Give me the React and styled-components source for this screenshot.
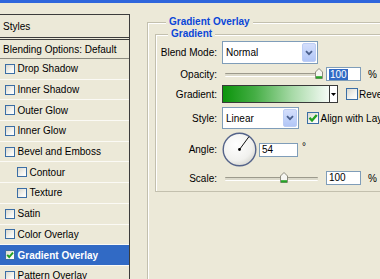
import React from 'react';
import styled, { createGlobalStyle } from 'styled-components';

const GlobalStyle = createGlobalStyle`
  html, body {
    margin: 0;
    padding: 0;
    background: #ece9d8;
  }
  body {
    font-family: "Liberation Sans", Arial, sans-serif;
    font-size: 10px;
    color: #000;
    overflow: hidden;
  }
`;

const Window = styled.div`
  width: 380px;
  height: 279px;
  box-sizing: border-box;
  border-top: 3px solid #2f66dc;
  background: #ece9d8;
  display: flex;
  overflow: hidden;
`;

/* ---------- left style list ---------- */

const StyleList = styled.div`
  flex: 0 0 130px;
  box-sizing: border-box;
  margin-top: 11px;
  border-top: 1px solid #3c3c3c;
  border-right: 1px solid #3c3c3c;
`;

const ListHeader = styled.div`
  height: ${p => p.$h}px;
  display: flex;
  align-items: center;
  padding-left: 3px;
  border-bottom: ${p => p.$border};
  white-space: nowrap;
`;

const ListItem = styled.div`
  height: 20.7px;
  box-sizing: border-box;
  display: flex;
  align-items: center;
  padding-left: ${p => (p.$sub ? 17 : 5)}px;
  border-bottom: 1px solid #fbfaf5;
  background: ${p => (p.$selected ? '#316ac5' : 'transparent')};
  color: ${p => (p.$selected ? '#fff' : '#000')};
  font-weight: ${p => (p.$selected ? 'bold' : 'normal')};
  white-space: nowrap;
`;

const Box = styled.span`
  flex: 0 0 auto;
  width: ${p => p.$size}px;
  height: ${p => p.$size}px;
  box-sizing: border-box;
  border: 1px solid #3b6ea5;
  background: linear-gradient(135deg, #d9d8cf 0%, #f4f4f0 60%, #fff 100%);
  display: flex;
  align-items: center;
  justify-content: center;
  margin-right: ${p => p.$gap}px;
`;

const Checkbox = ({ checked, size = 10, gap = 2.5 }) => (
  <Box $size={size} $gap={gap}>
    {checked && (
      <svg width={size - 2} height={size - 2} viewBox="0 0 8 8">
        <path d="M1.2 3.8 L3.2 6 L7 1.6" fill="none" stroke="#21a121" strokeWidth="1.9" />
      </svg>
    )}
  </Box>
);

const effects = [
  { label: 'Drop Shadow' },
  { label: 'Inner Shadow' },
  { label: 'Outer Glow' },
  { label: 'Inner Glow' },
  { label: 'Bevel and Emboss' },
  { label: 'Contour', sub: true },
  { label: 'Texture', sub: true },
  { label: 'Satin' },
  { label: 'Color Overlay' },
  { label: 'Gradient Overlay', checked: true, selected: true },
  { label: 'Pattern Overlay' },
  { label: 'Stroke' },
];

/* ---------- right options ---------- */

const Options = styled.div`
  flex: 1;
  min-width: 0;
  padding: 13px 0 0 17px;
`;

const Group = styled.fieldset`
  margin: 0;
  padding: ${p => p.$pad};
  width: ${p => p.$w}px;
  min-width: 0;
  height: ${p => (p.$tall ? '400px' : 'auto')};
  border: 1px solid #c3c0ae;
  box-shadow: inset 1px 1px 0 #fff;
`;

const Caption = styled.legend`
  margin-left: ${p => p.$offset}px;
  padding: 0 3px;
  line-height: 12px;
  font-weight: bold;
  font-size: 10px;
  color: #0a46d8;
  background: #ece9d8;
`;

const Rows = styled.div`
  display: flex;
  flex-direction: column;
  padding-top: 1px;
`;

const Row = styled.div`
  display: flex;
  align-items: center;
  height: ${p => p.$h}px;
  margin-top: ${p => p.$mt}px;
  white-space: nowrap;
`;

const Label = styled.span`
  flex: 0 0 61px;
  text-align: right;
  margin-right: 5px;
`;

const Combo = styled.div`
  width: ${p => p.$w}px;
  height: ${p => p.$h}px;
  box-sizing: border-box;
  border: 1px solid #7f9db9;
  background: #fff;
  display: flex;
  align-items: center;
  justify-content: space-between;
  padding: 1px;
`;

const ComboText = styled.span`
  padding-left: 2px;
`;

const ComboButton = styled.span`
  width: 14px;
  height: 100%;
  box-sizing: border-box;
  border: 1px solid #bccdf5;
  border-radius: 2px;
  background: linear-gradient(180deg, #d4defb 0%, #c1d2fa 55%, #b2c6f6 100%);
  display: flex;
  align-items: center;
  justify-content: center;
`;

const Select = ({ value, w, h }) => (
  <Combo $w={w} $h={h}>
    <ComboText>{value}</ComboText>
    <ComboButton>
      <svg width="8" height="6" viewBox="0 0 8 6">
        <path d="M1 1.2 L4 4.2 L7 1.2" fill="none" stroke="#4a5f8c" strokeWidth="1.8" />
      </svg>
    </ComboButton>
  </Combo>
);

const SliderWrap = styled.div`
  position: relative;
  width: 100px;
  height: 14px;
  flex: 0 0 auto;
`;

const Track = styled.div`
  position: absolute;
  left: 3px;
  right: 4px;
  top: 6px;
  height: 2px;
  border-top: 1px solid #9c9a8c;
  border-bottom: 1px solid #fff;
  background: #dcdacb;
  border-radius: 1px;
`;

const Thumb = styled.svg`
  position: absolute;
  left: ${p => p.$left}px;
  top: 1px;
`;

const Slider = ({ left }) => (
  <SliderWrap>
    <Track />
    <Thumb $left={left} width="8" height="11" viewBox="0 0 8 11">
      <path d="M0.5 10.5 V4 L4 0.5 L7.5 4 V10.5 Z" fill="#f6f6f2" stroke="#8d8b7e" />
      <rect x="1" y="8.2" width="6" height="2.3" fill="#27a327" />
    </Thumb>
  </SliderWrap>
);

const Field = styled.span`
  width: ${p => p.$w}px;
  height: 14px;
  box-sizing: border-box;
  border: 1px solid #7f9db9;
  background: #fff;
  margin-left: ${p => p.$ml}px;
  padding-left: 2px;
  display: flex;
  align-items: center;
  line-height: 10px;
`;

const Selected = styled.span`
  background: #316ac5;
  color: #fff;
  padding: 1px 1px 0;
`;

const Unit = styled.span`
  margin-left: ${p => p.$ml}px;
  align-self: ${p => (p.$raised ? 'flex-start' : 'center')};
  margin-top: ${p => (p.$raised ? 9 : 0)}px;
`;

const Swatch = styled.div`
  width: 108px;
  height: 18px;
  box-sizing: border-box;
  border: 1px solid #3a3a3a;
  background: linear-gradient(90deg, #0b940b 0%, #45ae45 30%, #a6d9a6 65%, #f6fbf6 100%);
`;

const SwatchArrow = styled.div`
  width: 8px;
  height: 18px;
  box-sizing: border-box;
  border: 1px solid #3a3a3a;
  border-left: none;
  background: #fff;
  display: flex;
  align-items: center;
  justify-content: center;
`;

const CheckLabel = styled.span`
  display: flex;
  align-items: center;
  margin-left: ${p => p.$ml}px;
`;

const Dial = () => (
  <svg width="35" height="35" viewBox="0 0 35 35">
    <defs>
      <radialGradient id="dialFill" cx="40%" cy="35%" r="70%">
        <stop offset="0%" stopColor="#ffffff" />
        <stop offset="70%" stopColor="#f1f1ee" />
        <stop offset="100%" stopColor="#d6d6d0" />
      </radialGradient>
    </defs>
    <circle cx="17.5" cy="17.5" r="16.3" fill="url(#dialFill)" stroke="#55648a" strokeWidth="1.4" />
    <line x1="17.5" y1="17.5" x2="27" y2="4.6" stroke="#111" strokeWidth="1" />
    <circle cx="17.5" cy="17.5" r="1.4" fill="#000" />
  </svg>
);

export default function App() {
  return (
    <>
      <GlobalStyle />
      <Window>
        <StyleList>
          <ListHeader $h={22} $border="3px double #3c3c3c">Styles</ListHeader>
          <ListHeader $h={18} $border="1px solid #8c8b80">Blending Options: Default</ListHeader>
          {effects.map(e => (
            <ListItem key={e.label} $sub={e.sub} $selected={e.selected}>
              <Checkbox checked={e.checked} />
              {e.label}
            </ListItem>
          ))}
        </StyleList>

        <Options>
          <Group $w={262} $pad="0 0 0 7px" $tall>
            <Caption $offset={11}>Gradient Overlay</Caption>
            <Group $w={250} $pad="0 0 6px 0">
              <Caption $offset={12}>Gradient</Caption>
              <Rows>
                <Row $h={23} $mt={0}>
                  <Label>Blend Mode:</Label>
                  <Select value="Normal" w={96} h={23} />
                </Row>
                <Row $h={14} $mt={3}>
                  <Label>Opacity:</Label>
                  <Slider left={93} />
                  <Field $w={35} $ml={4}>
                    <Selected>100</Selected>
                  </Field>
                  <Unit $ml={7}>%</Unit>
                </Row>
                <Row $h={18} $mt={4}>
                  <Label>Gradient:</Label>
                  <Swatch />
                  <SwatchArrow>
                    <svg width="5" height="3" viewBox="0 0 5 3">
                      <path d="M0 0 H5 L2.5 3 Z" fill="#000" />
                    </svg>
                  </SwatchArrow>
                  <CheckLabel $ml={8}>
                    <Checkbox size={12} gap={1} />
                    Reverse
                  </CheckLabel>
                </Row>
                <Row $h={22} $mt={4}>
                  <Label>Style:</Label>
                  <Select value="Linear" w={77} h={22} />
                  <CheckLabel $ml={8}>
                    <Checkbox checked size={12} gap={1.5} />
                    Align with Layer
                  </CheckLabel>
                </Row>
                <Row $h={35} $mt={3}>
                  <Label>Angle:</Label>
                  <Dial />
                  <Field $w={39} $ml={2}>54</Field>
                  <Unit $ml={4} $raised>°</Unit>
                </Row>
                <Row $h={14} $mt={4}>
                  <Label>Scale:</Label>
                  <Slider left={58} />
                  <Field $w={35} $ml={4}>100</Field>
                  <Unit $ml={7}>%</Unit>
                </Row>
              </Rows>
            </Group>
          </Group>
        </Options>
      </Window>
    </>
  );
}
